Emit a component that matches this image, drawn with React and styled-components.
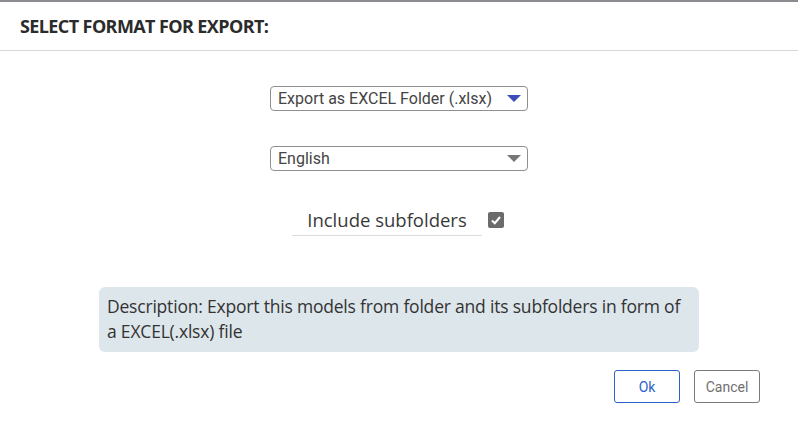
import styled, { createGlobalStyle } from 'styled-components';

const GlobalStyle = createGlobalStyle`
    html, body {
        margin: 0;
        padding: 0;
        background: #ffffff;
    }
`;

const Dialog = styled.div`
    width: 798px;
    height: 440px;
    box-sizing: border-box;
    border-top: 2px solid #8a8c90;
    background: #fff;
    display: flex;
    flex-direction: column;
`;

const Header = styled.div`
    height: 49px;
    box-sizing: border-box;
    border-bottom: 1px solid #d6d6d6;
    display: flex;
    align-items: center;
    padding: 0 20px;
    font-family: 'Open Sans', sans-serif;
    font-weight: 700;
    font-size: 18px;
    letter-spacing: -0.6px;
    color: #2b2b2b;
`;

const Body = styled.div`
    display: flex;
    flex-direction: column;
    align-items: center;
    padding-top: 35px;
`;

const Select = styled.div`
    width: 258px;
    height: 25px;
    box-sizing: border-box;
    border: 1px solid #8f8f8f;
    border-radius: 4px;
    display: flex;
    align-items: center;
    justify-content: space-between;
    padding: 0 6px 0 7px;
    margin-bottom: ${({ $gap }) => $gap || 0}px;
    font-family: Roboto, sans-serif;
    font-size: 16px;
    color: #444;
`;

const Arrow = styled.span`
    width: 0;
    height: 0;
    border-left: 7px solid transparent;
    border-right: 7px solid transparent;
    border-top: 7px solid ${({ $color }) => $color};
`;

const CheckRow = styled.div`
    display: flex;
    align-items: flex-start;
    gap: 6px;
    margin-right: 2px;
`;

const CheckLabel = styled.div`
    width: 190px;
    height: 27px;
    box-sizing: border-box;
    border-bottom: 1px solid #dcdcdc;
    text-align: center;
    font-family: 'Open Sans', sans-serif;
    font-size: 18.5px;
    color: #3a3a3a;
    line-height: 22px;
`;

const CheckBox = styled.span`
    width: 16px;
    height: 16px;
    margin-top: 3px;
    border-radius: 2px;
    background: #6b6b6b;
    display: flex;
    align-items: center;
    justify-content: center;
`;

const Description = styled.div`
    width: 600px;
    box-sizing: border-box;
    margin-top: 51px;
    padding: 7px 8px 8px;
    border-radius: 6px;
    background: #dde6eb;
    font-family: 'Open Sans', sans-serif;
    font-size: 17.5px;
    line-height: 25px;
    letter-spacing: -0.2px;
    color: #333;
`;

const Footer = styled.div`
    display: flex;
    justify-content: flex-end;
    gap: 14px;
    padding: 18px 38px 0 0;
`;

const Button = styled.button`
    width: 66px;
    height: 33px;
    background: #fff;
    border-radius: 3px;
    border: 1px solid ${({ $primary }) => ($primary ? '#2b63c6' : '#7a7a7a')};
    color: ${({ $primary }) => ($primary ? '#2b63c6' : '#6f6f6f')};
    font-family: Roboto, sans-serif;
    font-size: 14px;
    cursor: pointer;
`;

const App = () => {
    return (
        <>
            <GlobalStyle />
            <Dialog>
                <Header>SELECT FORMAT FOR EXPORT:</Header>
                <Body>
                    <Select $gap={35}>
                        <span>Export as EXCEL Folder (.xlsx)</span>
                        <Arrow $color="#3d4db7" />
                    </Select>
                    <Select $gap={38}>
                        <span>English</span>
                        <Arrow $color="#777" />
                    </Select>
                    <CheckRow>
                        <CheckLabel>Include subfolders</CheckLabel>
                        <CheckBox>
                            <svg width="12" height="12" viewBox="0 0 12 12">
                                <path d="M2 6.5 L4.8 9.2 L10 3" fill="none" stroke="#fff" strokeWidth="2" />
                            </svg>
                        </CheckBox>
                    </CheckRow>
                    <Description>
                        Description: Export this models from folder and its subfolders in form of a EXCEL(.xlsx) file
                    </Description>
                </Body>
                <Footer>
                    <Button $primary>Ok</Button>
                    <Button>Cancel</Button>
                </Footer>
            </Dialog>
        </>
    );
};

export default App;
